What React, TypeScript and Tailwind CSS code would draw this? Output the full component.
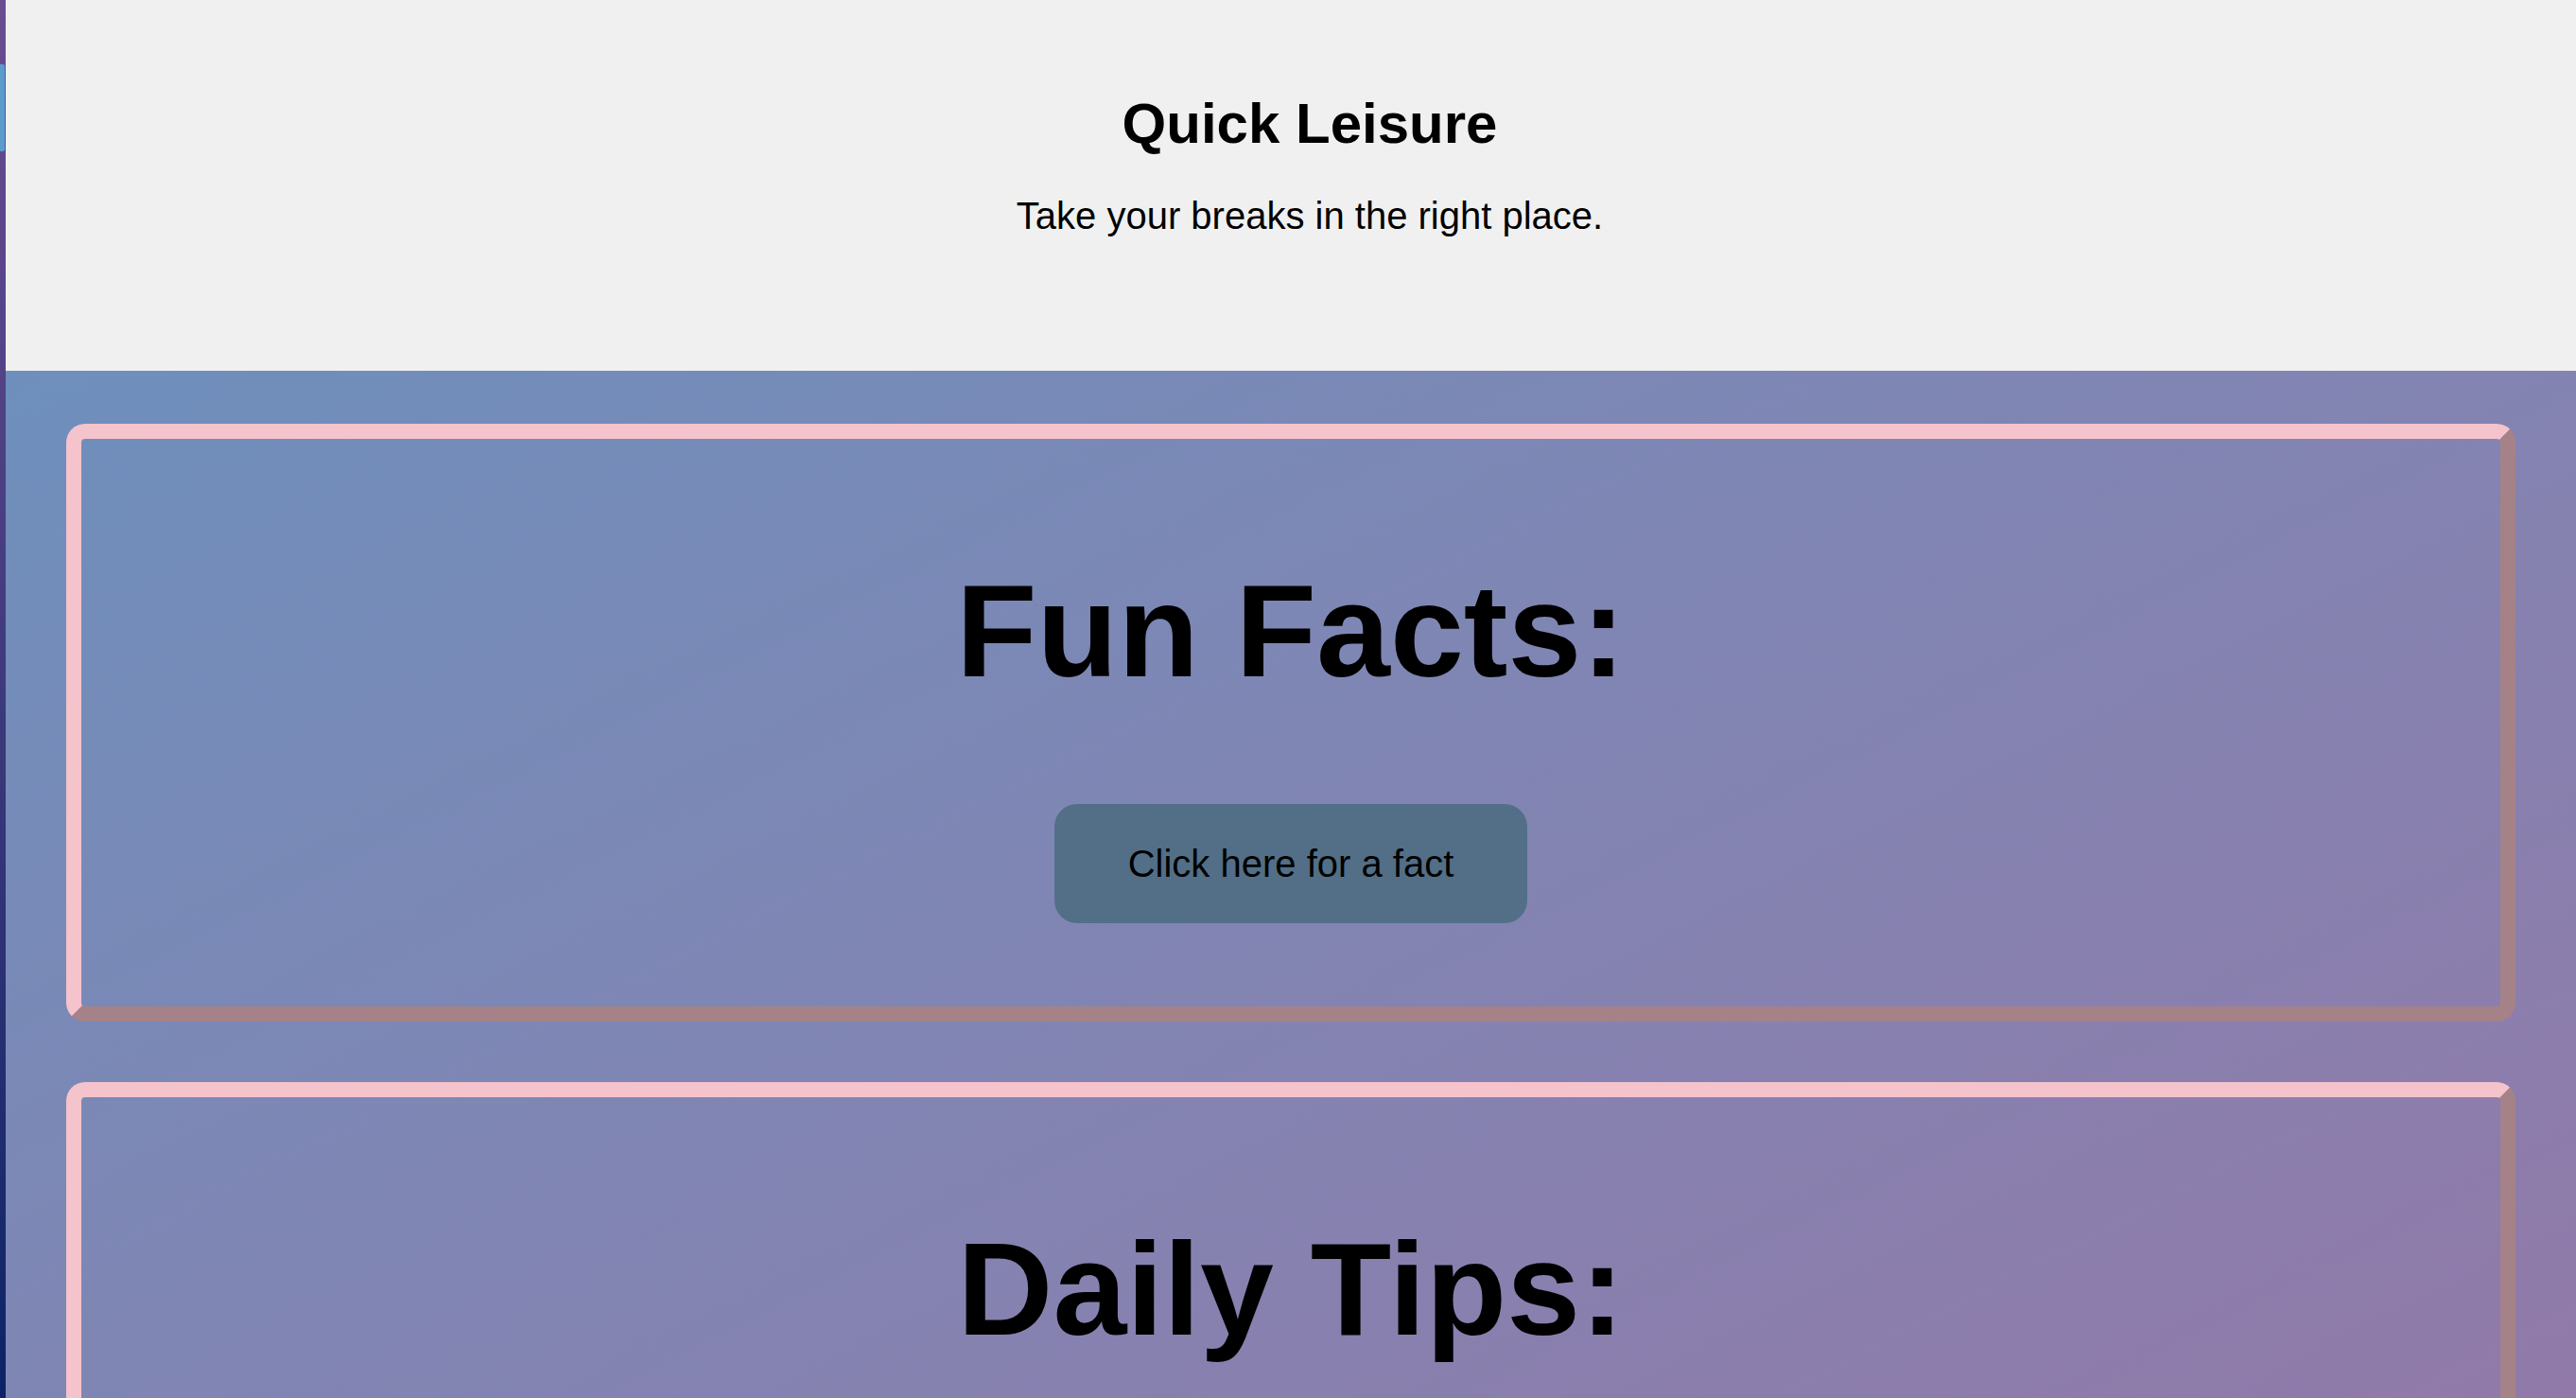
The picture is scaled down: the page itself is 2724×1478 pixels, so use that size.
import React from "react";

function Card({ title, button }: { title: string; button?: string }) {
  return (
    <section className="flex flex-col items-center rounded-[20px] border-[16px] border-solid border-t-[#f5c3cc] border-l-[#f5c3cc] border-b-[#a58287] border-r-[#a58287] pt-[123px] pb-[88px]">
      <h2 className="text-[140px] leading-[160px] font-bold text-black">{title}</h2>
      {button && (
        <button className="mt-[103px] rounded-[24px] bg-[#526f87] px-[78px] py-[40px] text-[40px] leading-[46px] text-black">
          {button}
        </button>
      )}
    </section>
  );
}

export default function App() {
  return (
    <div
      className="flex h-[1478px] w-full overflow-hidden"
      style={{ fontFamily: '"Liberation Sans", Arial, Helvetica, sans-serif' }}
    >
      <div className="flex w-[6px] shrink-0 flex-col bg-gradient-to-b from-[#6b4c93] via-[#3d3a7b] to-[#0b2366]">
        <div className="mt-[68px] h-[92px] w-[5px] rounded-r-[2px] bg-[#5a9ccc]" />
      </div>
      <div className="flex min-w-0 flex-1 flex-col">
        <header className="flex h-[392px] shrink-0 flex-col items-center bg-[#f0f0f0] pl-[40px] pt-[97px]">
          <h1 className="text-[60px] leading-[67px] font-bold text-black">Quick Leisure</h1>
          <p className="mt-[41px] text-[40px] leading-[46px] text-black">Take your breaks in the right place.</p>
        </header>
        <main className="flex flex-1 flex-col gap-[64px] bg-gradient-to-br from-[#6e8fbc] to-[#9477a7] px-[64px] pt-[56px]">
          <Card title="Fun Facts:" button="Click here for a fact" />
          <Card title="Daily Tips:" button="Click here for a tip" />
        </main>
      </div>
    </div>
  );
}
